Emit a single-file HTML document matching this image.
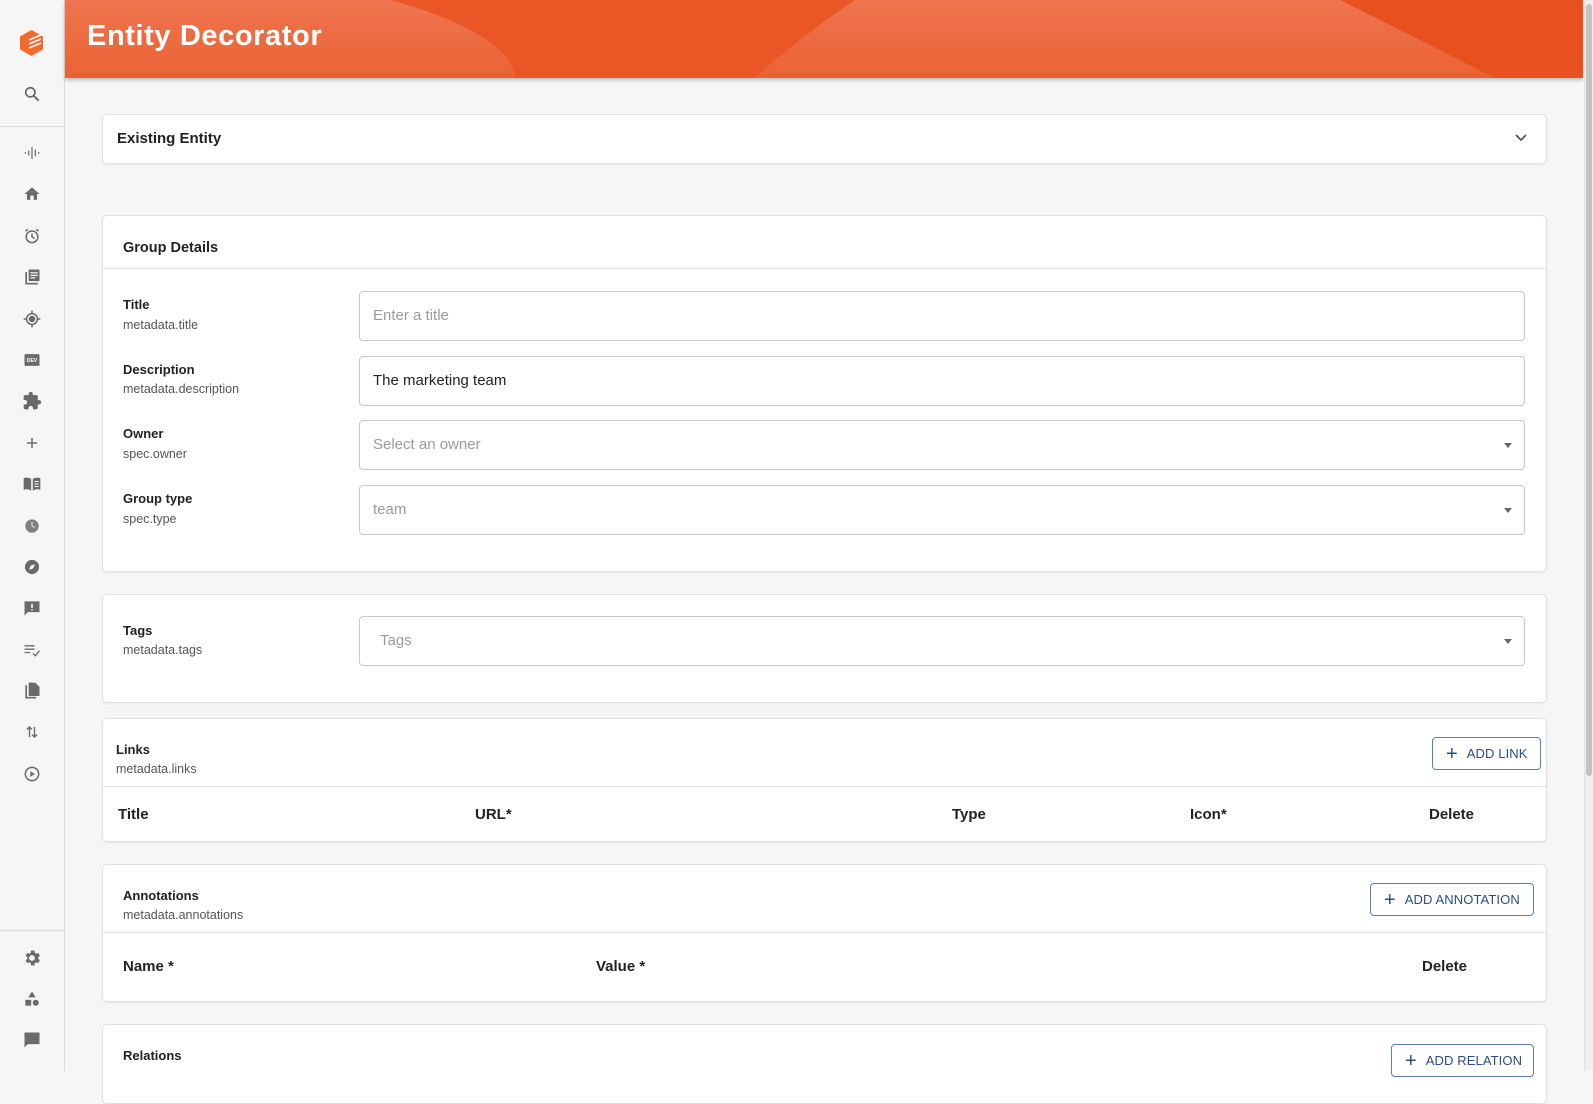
<!DOCTYPE html>
<html><head><meta charset="utf-8"><style>
*{box-sizing:border-box;margin:0;padding:0}
body{width:1593px;height:1071px;overflow:hidden;background:#f6f6f6;font-family:"Liberation Sans",Arial,sans-serif;color:#222;position:relative}
.sb{position:absolute;left:0;top:0;width:65px;height:1071px;background:#f6f6f6;border-right:1px solid #dcdcdc}
.ic{position:absolute;left:22px;width:20px;height:20px}
.hr{position:absolute;left:0;width:64px;border-top:1px solid #d9d9d9}
.hdr{position:absolute;left:65px;top:0;width:1518px;height:78px;overflow:hidden;background:#e9501f;box-shadow:0 2px 4px rgba(0,0,0,.25)}
.hdr h1{position:absolute;left:22px;top:20px;color:#fff;font-size:29px;font-weight:bold;letter-spacing:.6px}
.scroll{position:absolute;left:1584px;top:0;width:9px;height:1071px;background:#f0f0f0;border-left:1px solid #e2e2e2}
.thumb{position:absolute;left:1586px;top:4px;width:6px;height:772px;background:#c2c2c2;border-radius:3px}
.card{position:absolute;left:102px;width:1445px;background:#fff;border:1px solid #e0e0e0;border-radius:5px;box-shadow:0 1px 2px rgba(0,0,0,.06)}
.t{position:absolute;font-size:14px;font-weight:bold;color:#222}
.s{position:absolute;font-size:12.5px;color:#555}
.inp{position:absolute;left:256px;width:1166px;height:50px;border:1px solid #c8c8c8;border-radius:4px;font-size:15px;color:#9a9a9a;padding:15px 13px}
.arr{position:absolute;right:12px;top:22px;border-left:4px solid transparent;border-right:4px solid transparent;border-top:5px solid #666}
.line{position:absolute;left:0;right:0;border-top:1px solid #e0e0e0}
.btn{position:absolute;height:33px;border:1px solid #5b7fb0;border-radius:4px;color:#2a4d87;font-size:13px;letter-spacing:.1px;display:flex;align-items:center;padding-left:13px;white-space:nowrap}
.btn b{font-weight:normal;font-size:20px;margin-right:9px;line-height:1}
.ch{position:absolute;font-size:15px;font-weight:bold;color:#222}
</style></head><body>
<div class="sb">
<svg class="ic" style="left:18px;top:29px;width:27px;height:28px" viewBox="0 0 27 28"><polygon points="13.5,1 25,7.5 25,20.5 13.5,27 2,20.5 2,7.5" fill="#f26a2e"/><path d="M11 11l12-5M11 15l12-5M11 19l12-5" stroke="#fff" stroke-width="1.6"/></svg>
<svg class="ic" style="top:84px" viewBox="0 0 24 24"><circle cx="10" cy="10" r="5.5" fill="none" stroke="#666" stroke-width="2"/><path d="M14 14l6 6" stroke="#666" stroke-width="2.2"/></svg>
<div class="hr" style="top:126px"></div>
<svg class="ic" style="top:143px" viewBox="0 0 24 24" stroke="#777" stroke-width="1.6"><path d="M4 11v2M8 9v6M12 5v14M16 8v8M20 11v2"/></svg>
<svg class="ic" style="top:184px" viewBox="0 0 24 24"><path d="M12 4l9 8h-3v7h-4v-5h-4v5H6v-7H3z" fill="#6a6a6a"/></svg>
<svg class="ic" style="top:226px" viewBox="0 0 24 24" fill="none" stroke="#6a6a6a" stroke-width="1.8"><circle cx="12" cy="13" r="7"/><path d="M12 9v4l3 2M4 6l3-2M20 6l-3-2"/></svg>
<svg class="ic" style="top:267px" viewBox="0 0 24 24" fill="#6a6a6a"><path d="M4 6h2v13h13v2H4z"/><rect x="8" y="3" width="13" height="14" rx="1"/><path d="M10 7h9M10 10h9M10 13h6" stroke="#fff" stroke-width="1.4"/></svg>
<svg class="ic" style="top:309px" viewBox="0 0 24 24" fill="none" stroke="#6a6a6a" stroke-width="1.8"><circle cx="12" cy="12" r="6.5"/><circle cx="12" cy="12" r="3" fill="#6a6a6a"/><path d="M12 2v3M12 19v3M2 12h3M19 12h3"/></svg>
<svg class="ic" style="top:350px" viewBox="0 0 24 24"><rect x="3" y="5" width="18" height="14" rx="1" fill="#6a6a6a"/><text x="12" y="14.5" font-size="6" fill="#fff" text-anchor="middle" font-family="Liberation Sans" font-weight="bold">DEV</text></svg>
<svg class="ic" style="top:391px" viewBox="0 0 24 24"><path d="M20.5 11H19V7a2 2 0 0 0-2-2h-4V3.5a2.5 2.5 0 0 0-5 0V5H4a2 2 0 0 0-2 2v3.8h1.5a2.7 2.7 0 0 1 0 5.4H2V20a2 2 0 0 0 2 2h3.8v-1.5a2.7 2.7 0 0 1 5.4 0V22H17a2 2 0 0 0 2-2v-4h1.5a2.5 2.5 0 0 0 0-5z" fill="#6a6a6a"/></svg>
<svg class="ic" style="top:433px" viewBox="0 0 24 24" stroke="#6a6a6a" stroke-width="1.8"><path d="M12 6v12M6 12h12"/></svg>
<svg class="ic" style="top:474px" viewBox="0 0 24 24" fill="#6a6a6a"><path d="M2 5c3-1 6-1 9 1v14c-3-2-6-2-9-1z"/><path d="M13 6c3-2 6-2 9-1v14c-3-1-6-1-9 1z"/><path d="M15 9h5M15 12h5M15 15h5" stroke="#fff" stroke-width="1.2"/></svg>
<svg class="ic" style="top:516px" viewBox="0 0 24 24"><circle cx="12" cy="12" r="8" fill="#808080"/><path d="M12 7v5l3 2" stroke="#ddd" stroke-width="1.4" fill="none"/></svg>
<svg class="ic" style="top:557px" viewBox="0 0 24 24"><circle cx="12" cy="12" r="8.5" fill="#6a6a6a"/><path d="M15.5 8.5l-2 5-5 2 2-5z" fill="#fff"/></svg>
<svg class="ic" style="top:598px" viewBox="0 0 24 24" fill="#6a6a6a"><path d="M3 4h18v13H7l-4 4z"/><path d="M12 7v5M12 13.5v1.5" stroke="#fff" stroke-width="1.8"/></svg>
<svg class="ic" style="top:640px" viewBox="0 0 24 24" stroke="#6a6a6a" stroke-width="1.6" fill="none"><path d="M3 7h12M3 11h12M3 15h7M13 16l3 3 5-6"/></svg>
<svg class="ic" style="top:681px" viewBox="0 0 24 24" fill="#6a6a6a"><path d="M4 5h2v14h11v2H4z"/><path d="M8 2h8l5 5v11H8z"/></svg>
<svg class="ic" style="top:722px" viewBox="0 0 24 24" stroke="#6a6a6a" stroke-width="1.6" fill="none"><path d="M9 18V6M6 9l3-3 3 3M15 6v12M12 15l3 3 3-3"/></svg>
<svg class="ic" style="top:764px" viewBox="0 0 24 24" fill="none" stroke="#6a6a6a" stroke-width="1.8"><circle cx="12" cy="12" r="8"/><path d="M10 8.5v7l5.5-3.5z" fill="#6a6a6a" stroke="none"/></svg>
<div class="hr" style="top:930px"></div>
<svg class="ic" style="top:948px" viewBox="0 0 24 24"><path fill="#6a6a6a" d="M19.4 13a7.5 7.5 0 0 0 0-2l2.1-1.6-2-3.5-2.5 1a7 7 0 0 0-1.7-1L14.9 3h-4l-.4 2.9a7 7 0 0 0-1.7 1l-2.5-1-2 3.5L6.4 11a7.5 7.5 0 0 0 0 2l-2.1 1.6 2 3.5 2.5-1a7 7 0 0 0 1.7 1l.4 2.9h4l.4-2.9a7 7 0 0 0 1.7-1l2.5 1 2-3.5zM12 15.5a3.5 3.5 0 1 1 0-7 3.5 3.5 0 0 1 0 7z"/></svg>
<svg class="ic" style="top:989px" viewBox="0 0 24 24" fill="#6a6a6a"><path d="M12 3l4.5 7h-9z"/><rect x="4" y="13" width="7" height="7"/><circle cx="16.5" cy="16.5" r="3.6"/></svg>
<svg class="ic" style="top:1030px" viewBox="0 0 24 24" fill="#6a6a6a"><path d="M3 3h18v14H7l-4 4z"/></svg>
</div>
<div class="hdr">
<svg width="1518" height="78" style="position:absolute;left:0;top:0">
<defs><linearGradient id="g" x1="0" y1="0" x2="0" y2="1"><stop offset="0" stop-color="#ef7550"/><stop offset="1" stop-color="#ea6233"/></linearGradient></defs>
<rect width="1518" height="78" fill="url(#g)"/>
<path d="M325 0C400 20 450 50 450 78H690C720 50 760 20 790 0z" fill="#ea5626"/>
<path d="M1275 0L1430 78H1518V0z" fill="#e9501f"/>
</svg>
<h1>Entity Decorator</h1>
</div>
<div class="scroll"></div><div class="thumb"></div>

<div class="card" style="top:114px;height:50px">
<div class="t" style="left:14px;top:15px;font-size:15px">Existing Entity</div>
<svg style="position:absolute;right:18px;top:18px" width="14" height="10" viewBox="0 0 14 10"><path d="M2 2l5 5 5-5" stroke="#555" stroke-width="1.8" fill="none"/></svg>
</div>

<div class="card" style="top:215px;height:357px">
<div class="t" style="left:20px;top:24px;font-size:14.5px">Group Details</div>
<div class="line" style="top:52px"></div>
<div class="t" style="left:20px;top:81px;font-size:13px">Title</div><div class="s" style="left:20px;top:102px">metadata.title</div>
<div class="inp" style="top:75px">Enter a title</div>
<div class="t" style="left:20px;top:146px;font-size:13px">Description</div><div class="s" style="left:20px;top:166px">metadata.description</div>
<div class="inp" style="top:140px;color:#222">The marketing team</div>
<div class="t" style="left:20px;top:210px;font-size:13px">Owner</div><div class="s" style="left:20px;top:231px">spec.owner</div>
<div class="inp" style="top:204px">Select an owner<span class="arr"></span></div>
<div class="t" style="left:20px;top:275px;font-size:13px">Group type</div><div class="s" style="left:20px;top:296px">spec.type</div>
<div class="inp" style="top:269px">team<span class="arr"></span></div>
</div>

<div class="card" style="top:594px;height:109px">
<div class="t" style="left:20px;top:28px;font-size:13px">Tags</div><div class="s" style="left:20px;top:48px">metadata.tags</div>
<div class="inp" style="top:21px;padding-left:20px">Tags<span class="arr"></span></div>
</div>

<div class="card" style="top:718px;height:124px">
<div class="t" style="left:13px;top:23px;font-size:13px">Links</div><div class="s" style="left:13px;top:43px">metadata.links</div>
<div class="btn" style="left:1329px;top:18px;width:109px"><b>+</b>ADD LINK</div>
<div class="line" style="top:67px"></div>
<div class="ch" style="left:15px;top:87px">Title</div>
<div class="ch" style="left:372px;top:87px">URL*</div>
<div class="ch" style="left:849px;top:87px">Type</div>
<div class="ch" style="left:1087px;top:87px">Icon*</div>
<div class="ch" style="left:1326px;top:87px">Delete</div>
</div>

<div class="card" style="top:864px;height:138px">
<div class="t" style="left:20px;top:23px;font-size:13px">Annotations</div><div class="s" style="left:20px;top:43px">metadata.annotations</div>
<div class="btn" style="left:1267px;top:18px;width:164px"><b>+</b>ADD ANNOTATION</div>
<div class="line" style="top:67px"></div>
<div class="ch" style="left:20px;top:93px">Name *</div>
<div class="ch" style="left:493px;top:93px">Value *</div>
<div class="ch" style="left:1319px;top:93px">Delete</div>
</div>

<div class="card" style="top:1024px;height:80px">
<div class="t" style="left:20px;top:23px;font-size:13px">Relations</div>
<div class="btn" style="left:1288px;top:19px;width:143px"><b>+</b>ADD RELATION</div>
</div>
</body></html>
